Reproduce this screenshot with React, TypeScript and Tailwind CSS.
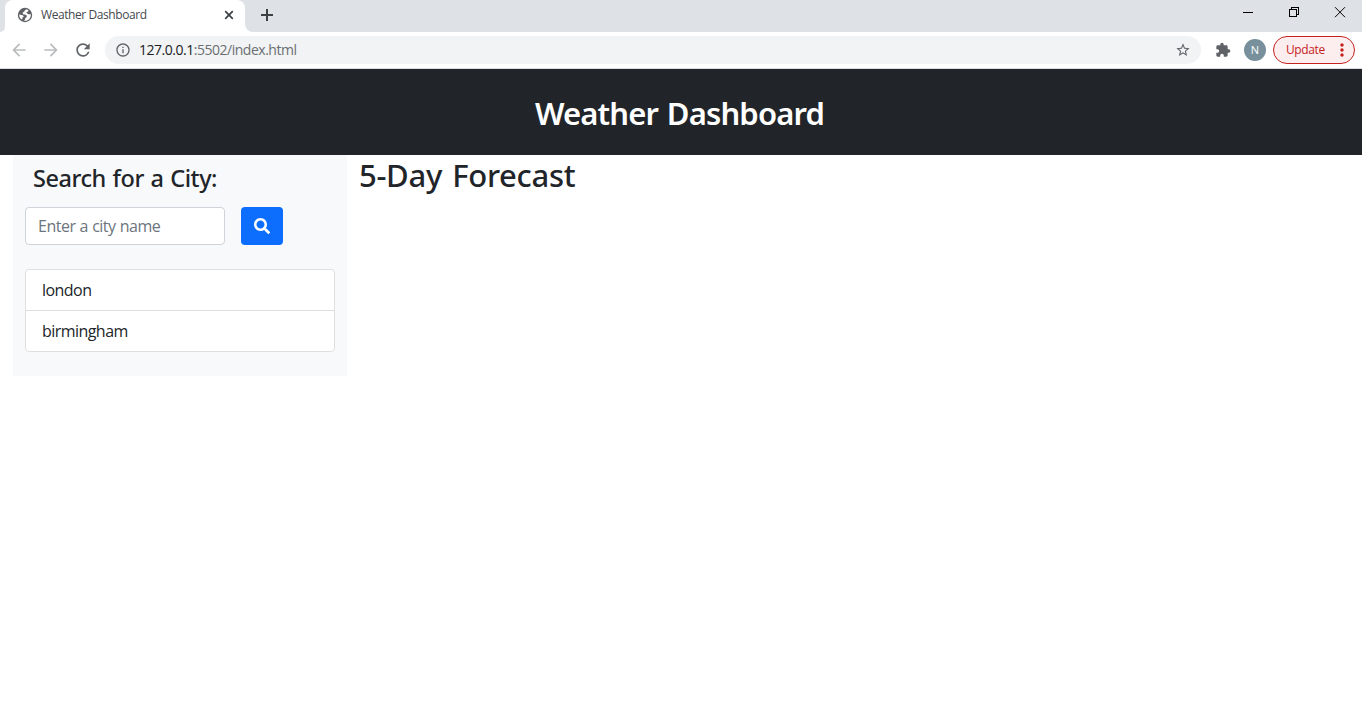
import React from 'react';
import {
  MdArrowBack,
  MdArrowForward,
  MdExtension,
  MdInfoOutline,
  MdMoreVert,
  MdRefresh,
  MdStarBorder,
} from 'react-icons/md';
import { FaSearch } from 'react-icons/fa';

const cities: string[] = ['london', 'birmingham'];

function GlobeIcon() {
  return (
    <svg className="mt-[-2px] h-4 w-4" viewBox="0 0 16 16" fill="none">
      <circle cx="8" cy="8" r="7.2" fill="#5f6368" />
      <path
        d="M9.600 2.200C8.200 3 7.300 3.600 7.200 4.700L5.700 5.400 5.900 7.200 8.800 7.800 9.900 8.800 9.500 10.200 8.300 11 7.900 12.700 6.800 13.700C8.800 14.300 11.500 13.300 12.700 11.400 13.700 9.800 14 8.300 13.700 6.900L12 7.500 10.300 6.500 9.200 5.700 10.900 4.600 11.500 3.200ZM2.200 7.600 5.700 8.200 6.900 9.500 5.500 10.600 5.300 12.300 4.200 12.200C2.900 11.200 2.100 9.500 2.200 7.600Z"
        fill="#fff"
      />
    </svg>
  );
}

function TabStrip() {
  return (
    <div className="flex h-8 bg-[#dee1e6]">
      <div className="h-full w-[5px] bg-white">
        <div className="h-full w-full rounded-br-[5px] bg-[#dee1e6]" />
      </div>
      <div className="flex h-full w-60 items-center rounded-t-lg bg-white pl-3 pr-[11px]">
        <GlobeIcon />
        <span className="ml-2 mt-[-2px] flex-1 whitespace-nowrap text-[12px] leading-4 tracking-[-0.42px] text-[#45494d]">
          Weather Dashboard
        </span>
        <svg className="mt-[-2px] h-[10px] w-[10px]" viewBox="0 0 10 10" fill="none" stroke="#3c4043" strokeWidth="1.7">
          <path d="M1.2 1.2 8.8 8.8M8.8 1.2 1.2 8.8" />
        </svg>
      </div>
      <div className="h-full w-2 bg-white">
        <div className="h-full w-full rounded-bl-lg bg-[#dee1e6]" />
      </div>
      <svg className="ml-2 mt-[9px] h-3 w-3" viewBox="0 0 12 12" fill="none" stroke="#3c4043" strokeWidth="2">
        <path d="M6 0v12M0 6h12" />
      </svg>
      <div className="ml-auto flex pt-[7px]" aria-label="Window controls">
        <svg className="h-3 w-[46px]" viewBox="0 0 46 12" shapeRendering="crispEdges">
          <path d="M19 5h10v1H19z" fill="#000" />
        </svg>
        <svg className="h-3 w-[46px]" viewBox="0 0 46 12" fill="none" stroke="#000" shapeRendering="crispEdges">
          <path d="M19.500 2.500h7v7h-7zM21.500 2V.5h7v7H27" />
        </svg>
        <svg className="h-3 w-[46px]" viewBox="0 0 46 12" fill="none" stroke="#000">
          <path d="m19 .2 10 10M29 .2l-10 10" />
        </svg>
      </div>
    </div>
  );
}

function Toolbar() {
  return (
    <div className="flex h-[37px] items-center border-b border-[#dadce0] bg-white pl-[9px] pr-[7px]">
      <MdArrowBack className="h-5 w-5 text-[#babcbe]" />
      <MdArrowForward className="ml-3 h-5 w-5 text-[#babcbe]" />
      <MdRefresh className="ml-3 h-5 w-5 text-[#5f6368]" />
      <div className="ml-3 flex h-7 w-[1096px] items-center rounded-full bg-[#f1f3f4] pl-[10px] pr-[10px]">
        <MdInfoOutline className="h-4 w-4 text-[#5f6368]" />
        <span className="ml-[8px] flex-1 text-[14px] leading-5 tracking-[-0.48px] text-[#6b6f73]">
          <span className="text-[#202124]">127.0.0.1</span>:5502/index.html
        </span>
        <MdStarBorder className="h-4 w-4 text-[#5f6368]" />
      </div>
      <MdExtension className="ml-[14px] h-4 w-4 text-[#5f6368]" />
      <div className="ml-[13px] flex h-[22px] w-[22px] items-center justify-center rounded-full bg-[#78909c] text-[11px] text-white">
        N
      </div>
      <div className="ml-[7px] flex h-7 w-[82px] shrink-0 items-center rounded-full border border-[#c5221f] bg-[#fceeee] pl-3 text-[12px] text-[#c5221f]">
        <span className="w-[39px] tracking-[-0.4px]">Update</span>
        <MdMoreVert className="ml-[7px] h-5 w-5 shrink-0" />
      </div>
    </div>
  );
}

function SearchPanel() {
  return (
    <aside className="h-[221px] w-[334px] bg-[#f8f9fa] px-3">
      <h2 className="h-[52px] pl-2 pt-[9px] font-['Noto_Sans',sans-serif] text-[23.5px] font-medium leading-[29px] tracking-[-0.45px] [word-spacing:1px]">
        Search for a City:
      </h2>
      <div className="flex gap-4">
        <input
          type="text"
          placeholder="Enter a city name"
          className="h-[38px] w-[200px] rounded border border-[#ced4da] bg-white px-3 text-[16px] tracking-[-0.5px] outline-none [word-spacing:0.5px] placeholder:text-[#6c757d]"
        />
        <button
          type="button"
          aria-label="Search"
          className="flex h-[38px] w-[42px] items-center justify-center rounded bg-[#0d6efd] text-white"
        >
          <FaSearch className="h-4 w-4" />
        </button>
      </div>
      <ul className="mt-6 divide-y divide-[#dfdfdf] rounded border border-[#dfdfdf] bg-white text-[16px] tracking-[-0.55px]">
        {cities.map((city) => (
          <li key={city} className="h-10 px-4 pt-2 leading-6 first:h-[41px]">
            {city}
          </li>
        ))}
      </ul>
    </aside>
  );
}

export default function App() {
  return (
    <div className="h-[707px] w-[1362px] overflow-hidden bg-white font-['Open_Sans','Noto_Sans',sans-serif] text-[#212529]">
      <TabStrip />
      <Toolbar />
      <header className="flex h-[86px] justify-center bg-[#212529] pr-[3px] pt-[25px]">
        <h1 className="font-['Noto_Sans',sans-serif] text-[31px] font-semibold leading-[38px] tracking-[-0.85px] text-white [word-spacing:1.5px]">
          Weather Dashboard
        </h1>
      </header>
      <main className="flex pl-[13px]">
        <SearchPanel />
        <section className="pl-3 pt-px">
          <h2 className="font-['Noto_Sans',sans-serif] text-[31px] font-medium leading-[38px] tracking-[-0.3px] [word-spacing:2.500px]">
            5-Day Forecast
          </h2>
        </section>
      </main>
    </div>
  );
}
